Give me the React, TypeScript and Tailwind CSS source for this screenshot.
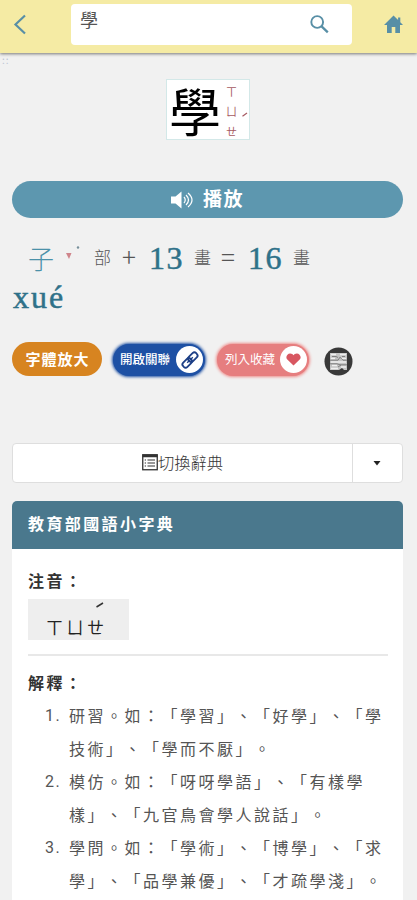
import type { ReactNode } from 'react';

const DEFINITIONS: string[][] = [
  ['研習。如：「學習」、「好學」、「學', '技術」、「學而不厭」。'],
  ['模仿。如：「呀呀學語」、「有樣學', '樣」、「九官鳥會學人說話」。'],
  ['學問。如：「學術」、「博學」、「求', '學」、「品學兼優」、「才疏學淺」。'],
];

function Header() {
  return (
    <header className="flex h-[53px] items-start bg-[#f5eba4] text-[#588fa6] shadow-[0_1px_3px_rgba(0,0,0,0.5)]">
      <button className="ml-[13px] mt-[14px] w-[58px]" aria-label="Back">
        <svg className="h-[21px] w-[14px]" viewBox="0 0 14 21" fill="none" stroke="currentColor" strokeWidth="2.2">
          <path d="M12 1.5 2.5 10.5 12 19.5" />
        </svg>
      </button>
      <div className="mt-1 flex h-[41px] w-[281px] justify-between rounded-[4px] bg-white">
        <span className="ml-[9px] mt-[4px] text-[18px] leading-[22px] text-[#555]">學</span>
        <svg className="mr-[23px] mt-[11px] h-[19px] w-[19px]" viewBox="0 0 19 19" fill="none" stroke="currentColor">
          <circle cx="7.2" cy="7" r="5.9" strokeWidth="1.9" />
          <path d="m11.6 11.4 6.2 6" strokeWidth="2.3" />
        </svg>
      </div>
      <button className="ml-[32px] mt-[15px]" aria-label="Home">
        <svg className="h-[19px] w-[19px]" viewBox="0 0 19 19" fill="currentColor">
          <path d="M9.5 0.5 0 10h3v8h4.7v-6h3.6v6H16v-8h3l-2.7-2.8V2.5h-2.2v2.6z" />
        </svg>
      </button>
    </header>
  );
}

function CharacterCard() {
  return (
    <div className="ml-[166px] mt-[14px] flex h-[61px] w-[84px] border border-[#d3e8e8] bg-white">
      <span className="ml-[2px] mt-px w-[52px] text-[52px] leading-[58px] text-black">學</span>
      <span className="relative ml-[4px] flex w-[13px] flex-col items-center pt-[1px] text-[11px] leading-[20px] text-[#a65961]">
        <span>ㄒ</span>
        <span>ㄩ</span>
        <span>ㄝ</span>
        <svg className="absolute left-[17px] top-[32px] h-[5px] w-[6px]" viewBox="0 0 6 5" stroke="currentColor">
          <path d="M0.5 4.2 5 1" strokeWidth="1.2" />
        </svg>
      </span>
    </div>
  );
}

function StrokeLine() {
  return (
    <div className="ml-[13px] mt-[20px] text-[#2f7189]">
      <div className="flex h-[39px] items-center font-['Liberation_Serif',serif] text-[32px] [-webkit-text-stroke:0.5px_currentColor]">
        <span className="relative ml-[15px] w-[66px] font-['Noto_Sans_CJK_TC',sans-serif] text-[26px] font-light text-[#4b91a9] [-webkit-text-stroke:0px]">
          子
          <svg className="absolute left-[38px] top-[8px] h-[16px] w-[17px]" viewBox="0 0 17 16">
            <path d="M0 7h5.5L3 13z" fill="#cf858b" />
            <circle cx="12" cy="1.5" r="1.2" fill="#78909b" />
          </svg>
        </span>
        <Unit className="w-[28px]">部</Unit>
        <Operator className="w-[27px]" plus />
        <span className="w-[45px] tracking-[1.5px]">13</span>
        <Unit className="w-[27px]">畫</Unit>
        <Operator className="w-[27px]" />
        <span className="w-[45px] tracking-[1.5px]">16</span>
        <Unit className="w-[20px]">畫</Unit>
      </div>
      <div className="h-[40px] font-['Liberation_Serif',serif] text-[32px] leading-[41px] tracking-[2px] [-webkit-text-stroke:0.5px_currentColor]">
        xué
      </div>
    </div>
  );
}

function Unit({ className, children }: { className: string; children: ReactNode }) {
  return (
    <span
      className={`${className} -mt-[2px] font-['Noto_Sans_CJK_TC',sans-serif] text-[17px] font-light text-[#555] [-webkit-text-stroke:0px]`}
    >
      {children}
    </span>
  );
}

function Operator({ className, plus = false }: { className: string; plus?: boolean }) {
  return (
    <span
      className={`${className} -mt-[4px] font-['Noto_Sans_CJK_TC',sans-serif] text-[26px] font-light leading-[30px] text-[#555] [-webkit-text-stroke:0px]`}
    >
      {plus ? '+' : '='}
    </span>
  );
}

function Actions() {
  return (
    <div className="ml-3 mt-[22px] flex h-[39px] items-center text-white">
      <button className="mt-px h-[34px] w-[90px] rounded-full bg-[#d78420] pl-px text-[15px] font-bold tracking-[1px]">
        字體放大
      </button>
      <button className="ml-[11px] mt-[2px] flex h-[32px] w-[92px] items-center rounded-full bg-[#1d50a4] pl-[7px] shadow-[0_0_3px_1px_#1d50a4]">
        <span className="w-[55px] text-left text-[12.5px] font-medium">開啟關聯</span>
        <span className="ml-px flex size-[27px] items-center justify-center rounded-full bg-white text-[#1d3f86]">
          <svg className="size-[20px]" viewBox="0 0 20 20" fill="none" stroke="currentColor" strokeWidth="1.8">
            <g transform="rotate(-45 10 10)">
              <rect x="0.8" y="7" width="10.5" height="6" rx="2.6" />
              <rect x="8.7" y="7" width="10.5" height="6" rx="2.6" />
              <path d="M6 10h8" strokeWidth="1.3" />
            </g>
          </svg>
        </span>
      </button>
      <button className="ml-[12px] mt-[2px] flex h-[32px] w-[92px] items-center rounded-full bg-[#e67e7f] pl-[8px] shadow-[0_0_3px_1px_#ef8b89]">
        <span className="w-[54px] text-left text-[12.5px]">列入收藏</span>
        <span className="ml-px flex size-[27px] items-center justify-center rounded-full bg-white text-[#d85761]">
          <svg className="h-[13px] w-[15px]" viewBox="0 0 15 13" fill="currentColor">
            <path d="M7.5 12.5 1.3 6.6C-1.5 3.6 2.5-1.5 6.3 1.1L7.5 2.3l1.2-1.2C12.5-1.5 16.5 3.6 13.7 6.6z" />
          </svg>
        </span>
      </button>
      <button className="ml-[15px] mt-[5px]" aria-label="Stroke order">
        <svg className="size-[29px]" viewBox="0 0 29 29" fill="none">
          <circle cx="14.5" cy="14.5" r="14" fill="#393939" />
          <path d="M6 6h17v17h-3l-2-2-3 2H6z" fill="#c4c4c4" />
          <path d="M7 7.5h5M16 7.5h6M7 11.5h4M17 11.5h5M7 15h15M8 18.5h5M7 21.5h7M17 20h5" stroke="#f0f0f0" strokeWidth="1.4" />
          <path d="M6 13.2h8l2-3 3 3h4M8 9.5h4l2 1M18 9.5h3M6 16.8h7l3 1h7M14 20l3-2" stroke="#777" strokeWidth="0.9" />
        </svg>
      </button>
    </div>
  );
}

function DictionarySwitch() {
  return (
    <div className="ml-3 mt-[65px] flex h-[40px] w-[391px] rounded-[4px] border border-[#dedede] bg-white">
      <button className="flex w-[340px] items-center justify-center border-r border-[#dedede] text-[16.3px] font-light text-[#333]">
        <svg className="-mt-[2px] h-[17px] w-[16px]" viewBox="0 0 16 17" fill="none" stroke="#333">
          <rect x="0.75" y="0.75" width="14.5" height="15" strokeWidth="1.3" />
          <path d="M0.5 2h15" strokeWidth="2.5" />
          <path d="M5.5 6h7.5M5.5 9h7.5M5.5 12h7.5" strokeWidth="1.1" />
          <path d="M2.7 6h1.3M2.7 9h1.3M2.7 12h1.3" strokeWidth="1.1" />
        </svg>
        <span className="-mt-[2px]">切換辭典</span>
      </button>
      <button className="flex flex-1 items-center justify-center" aria-label="More dictionaries">
        <svg className="-ml-px mt-px h-[5px] w-[8px]" viewBox="0 0 8 5">
          <path d="M0.5 0h7L4 4.5z" fill="#222" />
        </svg>
      </button>
    </div>
  );
}

function Dictionary() {
  return (
    <section className="ml-3 mt-[18px] h-[399px] w-[391px] overflow-hidden rounded-t-[5px] bg-white">
      <h2 className="h-[48px] bg-[#4a788d] pl-4 text-[16px] font-bold leading-[45px] tracking-[2.4px] text-white">
        教育部國語小字典
      </h2>
      <div className="pl-4 pr-[15px]">
        <h3 className="mt-[19px] text-[16px] font-bold leading-[24px] tracking-[2.5px] text-[#333]">注音：</h3>
        <div className="relative mt-[7px] flex h-[41px] w-[101px] items-end bg-[#eee] pb-[3px] pl-[18px] text-[17px] leading-[21px] tracking-[3.5px] text-[#222]">
          ㄒㄩㄝ
          <svg className="absolute left-[68px] top-[3px] h-[6px] w-[8px]" viewBox="0 0 8 6" stroke="#333">
            <path d="M0.5 5 7 1" strokeWidth="1.5" />
          </svg>
        </div>
        <hr className="mt-[14px] border-t-2 border-[#e8e8e8]" />
        <h3 className="mt-[14px] text-[16px] font-bold leading-[24px] tracking-[2.5px] text-[#333]">解釋：</h3>
        <ol className="mt-[5px]">
          {DEFINITIONS.map((lines, index) => (
            <li key={index} className="flex text-[16px] leading-[33px] tracking-[2.5px] text-[#555]">
              <span className="w-[41px] shrink-0 pl-[17px] font-[Roboto,sans-serif] tracking-[1.5px]">{index + 1}.</span>
              <span>
                {lines.map((line) => (
                  <span key={line} className="block whitespace-nowrap">
                    {line}
                  </span>
                ))}
              </span>
            </li>
          ))}
        </ol>
      </div>
    </section>
  );
}

export default function App() {
  return (
    <main
      lang="zh-Hant"
      className="h-[900px] w-[417px] overflow-hidden bg-[#f1f1f1] font-['Noto_Sans_CJK_TC',sans-serif] [text-spacing-trim:space-all]"
    >
      <Header />
      <div className="ml-[2px] mt-[5px] h-[7px] text-[10px] leading-[4px] tracking-[1px] text-[#b9c4d1]">::</div>
      <CharacterCard />
      <button className="ml-3 mt-[41px] flex h-[37px] w-[391px] items-center justify-center rounded-full bg-[#5d97af] text-white">
        <svg className="mr-[9px] h-[18px] w-[23px]" viewBox="0 0 23 18" fill="none" stroke="currentColor">
          <path d="M0 5.5h4.5L10.5 0.5v17l-6-5H0z" fill="currentColor" stroke="none" />
          <path d="M13 6q2.5 3 0 6M15 4q5 5 0 10M17 2q8 7 0 14" strokeWidth="1.2" />
        </svg>
        <span className="-mt-[2px] text-[19px] font-bold tracking-[1.5px]">播放</span>
      </button>
      <StrokeLine />
      <Actions />
      <DictionarySwitch />
      <Dictionary />
    </main>
  );
}
